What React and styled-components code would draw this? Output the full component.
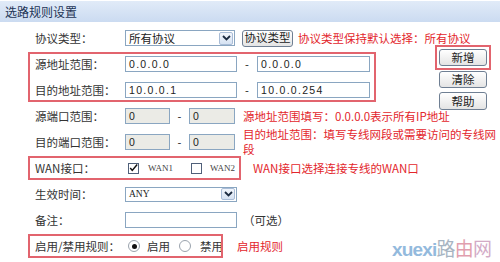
import React from "react";
import styled, { createGlobalStyle } from "styled-components";

const GlobalStyle = createGlobalStyle`
  html, body {
    margin: 0;
    padding: 0;
    background: #ffffff;
  }
  body {
    width: 500px;
    height: 262px;
    overflow: hidden;
    font-family: "Noto Sans CJK SC", "Liberation Sans", sans-serif;
    font-size: 11.5px;
    color: #333;
  }
`;

const Page = styled.div`
  position: relative;
  width: 500px;
  height: 262px;
`;

const Header = styled.div`
  height: 21px;
  margin-top: 1px;
  padding-left: 5px;
  display: flex;
  align-items: center;
  background: linear-gradient(#e1ebf8, #cbdbf1);
  color: #1e3556;
  font-size: 12px;
`;

const Body = styled.div`
  display: flex;
  padding-top: 3px;
`;

const Form = styled.div`
  width: 436px;
  box-sizing: border-box;
  flex-shrink: 0;
  padding-left: 27px;
  display: flex;
  flex-direction: column;
`;

const Row = styled.div`
  height: 26px;
  display: flex;
  align-items: center;
  white-space: nowrap;
`;

const Field = styled.div`
  display: flex;
  align-items: center;
  padding-left: 8px;
  height: 26px;
  box-sizing: border-box;
`;

const Boxed = styled.div`
  width: ${(p) => p.width};
  outline: 2px solid #e2646e;
  outline-offset: -3px;
  display: flex;
  flex-direction: column;
  flex-shrink: 0;
`;

const Label = styled.span`
  width: 90px;
  flex-shrink: 0;
  color: #333;
`;

const Input = styled.div`
  width: ${(p) => p.width}px;
  height: 16px;
  box-sizing: border-box;
  border: 1px solid #8aa6c1;
  background: ${(p) => (p.disabled ? "#ebebe6" : "#fff")};
  display: flex;
  align-items: center;
  padding-left: 3px;
  font-family: "Liberation Sans", sans-serif;
  font-size: 10.5px;
  letter-spacing: 1.3px;
  color: #222;
  flex-shrink: 0;
`;

const Dash = styled.span`
  width: ${(p) => p.width}px;
  text-align: center;
  color: #333;
  font-family: "Liberation Sans", sans-serif;
  flex-shrink: 0;
`;

const Select = styled.div`
  width: ${(p) => p.width}px;
  height: ${(p) => p.height}px;
  box-sizing: border-box;
  border: 1px solid #8aa6c1;
  display: flex;
  align-items: center;
  justify-content: space-between;
  padding: 0 1px 0 3px;
  background: #fff;
  flex-shrink: 0;
`;

const SelectText = styled.span`
  font-family: ${(p) =>
    p.serif ? '"Liberation Serif", serif' : '"Noto Sans CJK SC", sans-serif'};
  font-size: ${(p) => (p.serif ? "9.5px" : "11.5px")};
  color: #222;
`;

const Arrow = styled.span`
  width: 14px;
  height: ${(p) => p.height}px;
  box-sizing: border-box;
  border: 1px solid #a9bcd6;
  border-radius: 2px;
  background: linear-gradient(#f2f6fc, #d6e2f2);
  display: flex;
  align-items: center;
  justify-content: center;
`;

const Button = styled.button`
  width: ${(p) => p.width}px;
  height: ${(p) => p.height}px;
  padding: 0;
  margin: 0;
  margin-left: ${(p) => p.gap || 0}px;
  box-sizing: border-box;
  border: 1px solid #6f7f93;
  border-radius: 3px;
  background: linear-gradient(#ffffff, #e4e4e4);
  font-family: "Noto Sans CJK SC", sans-serif;
  font-size: 11.5px;
  color: #222;
  line-height: 1;
  flex-shrink: 0;
`;

const Note = styled.span`
  color: #e3262c;
  font-size: 11.5px;
  margin-left: ${(p) => p.gap}px;
  white-space: ${(p) => (p.wrap ? "normal" : "nowrap")};
  width: ${(p) => (p.wrap ? "258px" : "auto")};
  line-height: 15px;
  flex-shrink: 0;
`;

const Plain = styled.span`
  margin-left: ${(p) => p.gap}px;
  color: #333;
`;

const Check = styled.span`
  width: 11px;
  height: 11px;
  box-sizing: border-box;
  border: 1px solid #50607a;
  background: #fff;
  display: flex;
  align-items: center;
  justify-content: center;
  margin-left: ${(p) => p.gap}px;
  flex-shrink: 0;
`;

const SmallText = styled.span`
  font-family: "Liberation Serif", serif;
  font-size: 9px;
  color: #444;
  margin-left: ${(p) => p.gap}px;
`;

const Radio = styled.span`
  width: 12px;
  height: 12px;
  box-sizing: border-box;
  border-radius: 50%;
  border: 1px solid #9aa3ad;
  background: #fff;
  display: flex;
  align-items: center;
  justify-content: center;
  margin-left: ${(p) => p.gap}px;
  flex-shrink: 0;

  &::after {
    content: "";
    width: 5px;
    height: 5px;
    border-radius: 50%;
    background: ${(p) => (p.checked ? "#111" : "transparent")};
  }
`;

const Actions = styled.div`
  display: flex;
  flex-direction: column;
  align-items: center;
  gap: 4px;
  padding-top: 21px;
`;

const Highlight = styled.div`
  padding: 3px 3px;
  outline: 2px solid #e2646e;
  outline-offset: -1px;
  margin-bottom: -2px;
`;

const Watermark = styled.div`
  position: absolute;
  left: 392px;
  top: 236px;
  font-family: "Liberation Sans", "Noto Sans CJK SC", sans-serif;
  font-size: 19px;
  line-height: 22px;
  font-weight: bold;
  letter-spacing: -0.8px;
  opacity: 0.75;
  white-space: nowrap;
`;

const Mark = styled.span`
  color: ${(p) => p.color};
  font-weight: ${(p) => (p.light ? "normal" : "bold")};
  font-family: ${(p) =>
    p.light ? '"Noto Sans CJK SC", sans-serif' : "inherit"};
`;

const Chevron = () => (
  <svg width="9" height="6" viewBox="0 0 9 6">
    <path d="M1 1 L4.5 4.5 L8 1" fill="none" stroke="#1c2b40" strokeWidth="1.8" />
  </svg>
);

const Tick = () => (
  <svg width="11" height="10" viewBox="0 0 11 10">
    <path d="M1.5 5 L4 8 L10 0.8" fill="none" stroke="#111" strokeWidth="1.8" />
  </svg>
);

export default function App() {
  return (
    <Page>
      <GlobalStyle />
      <Header>选路规则设置</Header>
      <Body>
        <Form>
          <Row>
            <Field>
              <Label>协议类型：</Label>
              <Select width={110} height={16}>
                <SelectText>所有协议</SelectText>
                <Arrow height={13}>
                  <Chevron />
                </Arrow>
              </Select>
              <Button width={51} height={17} gap={7}>
                协议类型
              </Button>
              <Note gap={5}>协议类型保持默认选择：所有协议</Note>
            </Field>
          </Row>

          <Boxed width="350px">
            <Row>
              <Field>
                <Label>源地址范围：</Label>
                <Input width={112}>0.0.0.0</Input>
                <Dash width={20}>-</Dash>
                <Input width={113}>0.0.0.0</Input>
              </Field>
            </Row>
            <Row>
              <Field>
                <Label>目的地址范围：</Label>
                <Input width={112}>10.0.0.1</Input>
                <Dash width={20}>-</Dash>
                <Input width={113}>10.0.0.254</Input>
              </Field>
            </Row>
          </Boxed>

          <Row>
            <Field>
              <Label>源端口范围：</Label>
              <Input width={45} disabled>0</Input>
              <Dash width={19}>-</Dash>
              <Input width={46} disabled>0</Input>
              <Note gap={8}>源地址范围填写：0.0.0.0表示所有IP地址</Note>
            </Field>
          </Row>
          <Row>
            <Field>
              <Label>目的端口范围：</Label>
              <Input width={45} disabled>0</Input>
              <Dash width={19}>-</Dash>
              <Input width={46} disabled>0</Input>
              <Note gap={8} wrap>
                目的地址范围：填写专线网段或需要访问的专线网段
              </Note>
            </Field>
          </Row>

          <Row>
            <Boxed width="215px">
              <Field>
                <Label>WAN接口：</Label>
                <Check gap={3}>
                  <Tick />
                </Check>
                <SmallText gap={9}>WAN1</SmallText>
                <Check gap={18} />
                <SmallText gap={8}>WAN2</SmallText>
              </Field>
            </Boxed>
            <Note gap={11}>WAN接口选择连接专线的WAN口</Note>
          </Row>

          <Row>
            <Field>
              <Label>生效时间：</Label>
              <Select width={112} height={15}>
                <SelectText serif>ANY</SelectText>
                <Arrow height={12}>
                  <Chevron />
                </Arrow>
              </Select>
            </Field>
          </Row>
          <Row>
            <Field>
              <Label>备注：</Label>
              <Input width={112} />
              <Plain gap={6}>（可选）</Plain>
            </Field>
          </Row>

          <Row>
            <Boxed width="197px">
              <Field>
                <Label>启用/禁用规则：</Label>
                <Radio gap={3} checked />
                <Plain gap={7}>启用</Plain>
                <Radio gap={9} />
                <Plain gap={9}>禁用</Plain>
              </Field>
            </Boxed>
            <Note gap={13}>启用规则</Note>
          </Row>
        </Form>

        <Actions>
          <Highlight>
            <Button width={48} height={17}>新增</Button>
          </Highlight>
          <Button width={48} height={17}>清除</Button>
          <Button width={48} height={18}>帮助</Button>
        </Actions>
      </Body>

      <Watermark>
        <Mark color="#6fa3d2">xuexi</Mark>
        <Mark color="#8a9cae" light>路</Mark>
        <Mark color="#d77e93" light>由</Mark>
        <Mark color="#c58fb4" light>网</Mark>
      </Watermark>
    </Page>
  );
}
